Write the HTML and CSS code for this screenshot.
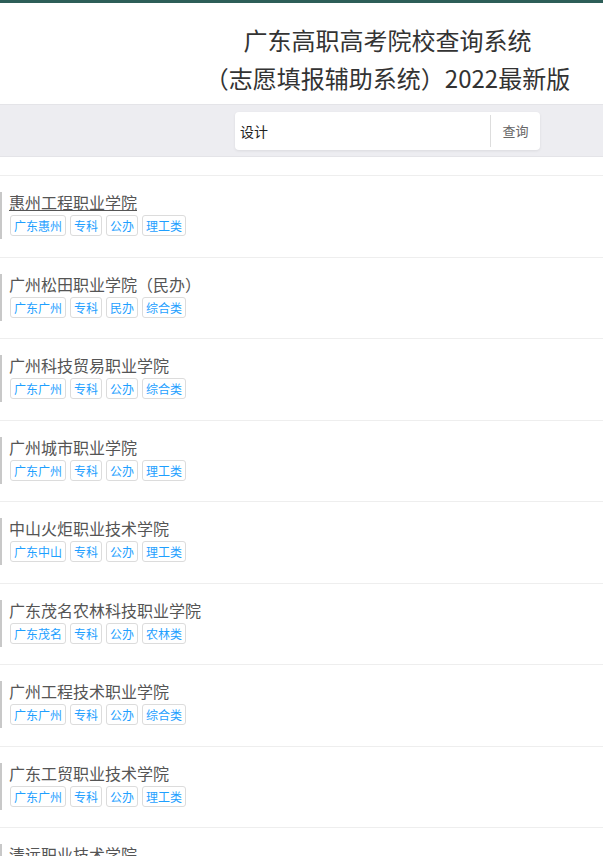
FILE: index.html
```html
<!DOCTYPE html>
<html lang="zh-CN">
<head>
<meta charset="utf-8">
<title>广东高职高考院校查询系统</title>
<link rel="stylesheet" href="styles.css">
</head>
<body>
<div class="page">
  <header class="header">
    <h1 class="title">广东高职高考院校查询系统<br>（志愿填报辅助系统）2022最新版</h1>
  </header>
  <div class="search-band">
    <div class="search-box">
      <input class="search-input" type="text" value="设计">
      <span class="search-btn">查询</span>
    </div>
  </div>
  <div class="spacer"></div>
  <ul class="list">
    <li class="item"><div class="inner"><a class="name hover">惠州工程职业学院</a><div class="tags"><span class="tag">广东惠州</span><span class="tag">专科</span><span class="tag">公办</span><span class="tag">理工类</span></div></div></li>
    <li class="item"><div class="inner"><a class="name">广州松田职业学院（民办）</a><div class="tags"><span class="tag">广东广州</span><span class="tag">专科</span><span class="tag">民办</span><span class="tag">综合类</span></div></div></li>
    <li class="item"><div class="inner"><a class="name">广州科技贸易职业学院</a><div class="tags"><span class="tag">广东广州</span><span class="tag">专科</span><span class="tag">公办</span><span class="tag">综合类</span></div></div></li>
    <li class="item"><div class="inner"><a class="name">广州城市职业学院</a><div class="tags"><span class="tag">广东广州</span><span class="tag">专科</span><span class="tag">公办</span><span class="tag">理工类</span></div></div></li>
    <li class="item"><div class="inner"><a class="name">中山火炬职业技术学院</a><div class="tags"><span class="tag">广东中山</span><span class="tag">专科</span><span class="tag">公办</span><span class="tag">理工类</span></div></div></li>
    <li class="item"><div class="inner"><a class="name">广东茂名农林科技职业学院</a><div class="tags"><span class="tag">广东茂名</span><span class="tag">专科</span><span class="tag">公办</span><span class="tag">农林类</span></div></div></li>
    <li class="item"><div class="inner"><a class="name">广州工程技术职业学院</a><div class="tags"><span class="tag">广东广州</span><span class="tag">专科</span><span class="tag">公办</span><span class="tag">综合类</span></div></div></li>
    <li class="item"><div class="inner"><a class="name">广东工贸职业技术学院</a><div class="tags"><span class="tag">广东广州</span><span class="tag">专科</span><span class="tag">公办</span><span class="tag">理工类</span></div></div></li>
    <li class="item"><div class="inner"><a class="name">清远职业技术学院</a><div class="tags"><span class="tag">广东清远</span><span class="tag">专科</span><span class="tag">公办</span><span class="tag">综合类</span></div></div></li>
  </ul>
</div>
</body>
</html>
```

FILE: styles.css
```css
html, body {
  margin: 0;
  padding: 0;
  overflow: hidden;
  background: #fff;
}
body {
  font-family: "Noto Sans CJK SC", "Noto Sans", "Liberation Sans", sans-serif;
  color: #333;
}
.page {
  border-top: 3px solid #2d5e58;
}
.header {
  height: 101px;
  box-sizing: border-box;
  padding: 18px 0 0 172px;
  text-align: center;
}
.title {
  margin: 0;
  font-size: 24px;
  font-weight: normal;
  line-height: 38px;
  color: #333;
}
.search-band {
  background: #ededf1;
  border-top: 1px solid #e4e4e8;
  border-bottom: 1px solid #e4e4e8;
  height: 53px;
  box-sizing: border-box;
  padding: 7px 0 0 172px;
  display: flex;
  justify-content: center;
  align-items: flex-start;
}
.search-box {
  width: 305px;
  height: 38px;
  background: #fff;
  border-radius: 4px;
  box-shadow: 0 1px 3px rgba(0, 0, 0, 0.08);
  display: flex;
  align-items: center;
}
.search-input {
  flex: 1;
  min-width: 0;
  border: 0;
  outline: none;
  background: transparent;
  font-family: inherit;
  font-size: 14px;
  color: #222;
  padding: 0 0 0 5px;
  height: 100%;
}
.search-btn {
  width: 50px;
  height: 32px;
  line-height: 32px;
  border-left: 1px solid #ddd;
  text-align: center;
  font-size: 13px;
  color: #666;
  box-sizing: border-box;
}
.spacer {
  height: 18px;
}
.list {
  list-style: none;
  margin: 0;
  padding: 0;
}
.item {
  border-top: 1px solid #eee;
  padding: 16px 0 17.5px 0;
}
.inner {
  border-left: 2px solid #c8c8c8;
  padding: 0 0 3px 7px;
}
.name {
  display: block;
  font-size: 16px;
  line-height: 20px;
  color: #555;
  text-decoration: none;
}
.name.hover {
  text-decoration: underline;
}
.tags {
  display: flex;
  gap: 4px;
  margin-top: 3px;
  padding-left: 1px;
}
.tag {
  display: inline-block;
  height: 21px;
  line-height: 19px;
  box-sizing: border-box;
  padding: 0 3px;
  border: 1px solid #dcdcdc;
  border-radius: 3px;
  font-size: 12px;
  color: #1e9fff;
}
```
